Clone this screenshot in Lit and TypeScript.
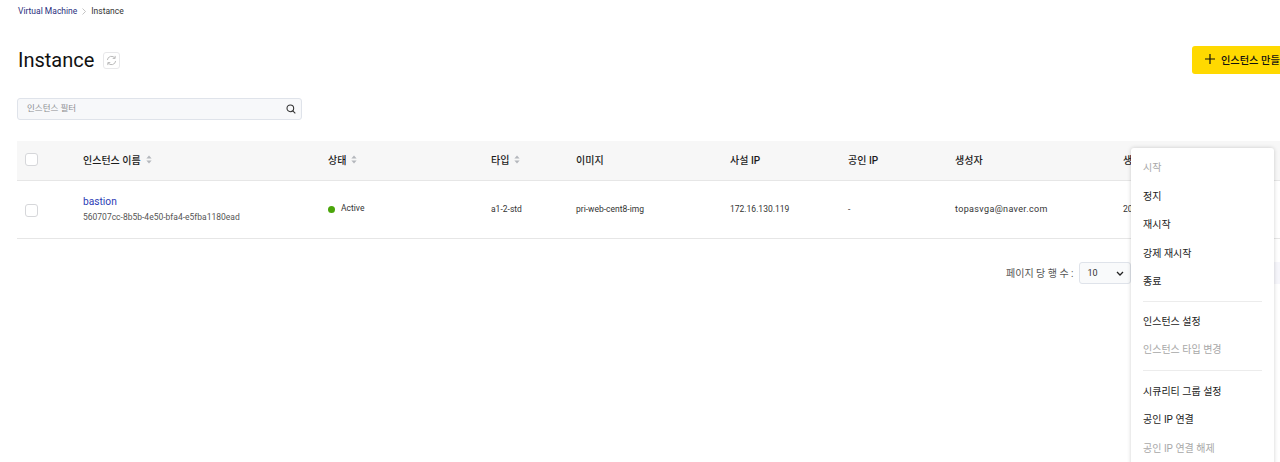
import { LitElement, html, css } from "lit";
import { customElement } from "lit/decorators.js";

const sortIcon = html`<svg class="sort" width="6" height="9" viewBox="0 0 6 9"><path d="M3 .5 5.6 3.6H.4z" fill="#b4b7bc"/><path d="M3 8.5 .4 5.4h5.2z" fill="#b4b7bc"/></svg>`;

type Entry = { label: string; off?: boolean } | { sep: "a" | "b" };

const menu: Entry[] = [
  { label: "시작", off: true },
  { label: "정지" },
  { label: "재시작" },
  { label: "강제 재시작" },
  { label: "종료" },
  { sep: "a" },
  { label: "인스턴스 설정" },
  { label: "인스턴스 타입 변경", off: true },
  { sep: "b" },
  { label: "시큐리티 그룹 설정" },
  { label: "공인 IP 연결" },
  { label: "공인 IP 연결 해제", off: true },
];

@customElement("app-root")
export class AppRoot extends LitElement {
  static styles = css`
    :host {
      display: block;
      position: relative;
      width: 1280px;
      height: 462px;
      overflow: hidden;
      background: #fff;
      font-family: Roboto, "Noto Sans CJK KR", sans-serif;
      color: #222;
    }
    .page {
      width: 1296px;
      padding: 6px 0 0 17px;
      box-sizing: border-box;
    }
    .crumbs {
      display: flex;
      align-items: center;
      height: 10px;
      padding-left: 1px;
      font-size: 8.5px;
      line-height: 10px;
      color: #333;
    }
    .crumbs .link { color: #2a2f7e; }
    .crumbs svg { margin: 0 5px 0 5px; }
    .head {
      display: flex;
      justify-content: space-between;
      align-items: center;
      margin-top: 30px;
      height: 28px;
      padding-left: 1px;
    }
    .title {
      display: flex;
      align-items: center;
      gap: 9px;
      font-size: 20px;
      font-weight: 400;
      color: #111;
    }
    .refresh {
      width: 17px;
      height: 17px;
      border: 1px solid #e8e8ea;
      border-radius: 3px;
      display: flex;
      align-items: center;
      justify-content: center;
      box-sizing: border-box;
    }
    .create {
      width: 104px;
      height: 28px;
      background: #ffd900;
      border-radius: 3px;
      display: flex;
      align-items: center;
      gap: 6px;
      padding: 0 0 2px 13px;
      box-sizing: border-box;
      font-size: 10.2px;
      font-weight: 500;
      color: #111;
      white-space: nowrap;
    }
    .filter {
      display: flex;
      align-items: center;
      justify-content: space-between;
      margin-top: 24px;
      width: 285px;
      height: 22px;
      padding: 0 5px 0 9px;
      box-sizing: border-box;
      background: #f7f8fa;
      border: 1px solid #dfe3ea;
      border-radius: 3px;
      font-size: 8.5px;
      color: #8b8d91;
    }
    .filter span { margin-top: -4px; }
    .table { margin-top: 21px; }
    .row {
      display: grid;
      grid-template-columns: 66px 245px 163px 85px 154px 118px 107px 168px 1fr;
      align-items: center;
      box-sizing: border-box;
      border-bottom: 1px solid #e6e6e6;
      white-space: nowrap;
    }
    .row.th {
      height: 40px;
      padding-bottom: 2px;
      background: #f7f7f7;
      font-size: 10px;
      font-weight: 500;
      color: #1c1c1c;
    }
    .row.td {
      height: 58px;
      padding-bottom: 1px;
      font-size: 8.5px;
      color: #333;
    }
    .cb {
      width: 13px;
      height: 13px;
      margin-left: 8px;
      background: #fff;
      border: 1px solid #d6d7da;
      border-radius: 3px;
      box-sizing: border-box;
    }
    .td .cb { margin-top: 3px; }
    .cell { display: flex; align-items: center; gap: 5px; }
    .sort { display: block; }
    .name { display: flex; flex-direction: column; gap: 3px; }
    .name a { font-size: 10.2px; line-height: 13px; color: #2b3bb5; }
    .name span { font-size: 8.5px; line-height: 12px; color: #555; }
    .dot {
      width: 7px;
      height: 7px;
      border-radius: 50%;
      background: #4aa50a;
    }
    .status { gap: 6px; }
    .status span { margin-top: -2px; }
    .mail { font-size: 9px; letter-spacing: 0.35px; }
    .pager {
      display: flex;
      align-items: center;
      gap: 5px;
      margin: 23px 0 0 989px;
      font-size: 10px;
      color: #555;
      white-space: nowrap;
    }
    .pager > span { margin-top: -2px; }
    .select {
      flex: none;
      width: 52px;
      height: 22px;
      box-sizing: border-box;
      border: 1px solid #dfe3ea;
      border-radius: 3px;
      background: #f9fafb;
      display: flex;
      align-items: center;
      justify-content: space-between;
      padding: 0 6px 0 8px;
      font-size: 9px;
      color: #333;
    }
    .pages {
      flex: none;
      width: 150px;
      height: 22px;
      margin-left: 2px;
      background: #f6f6fb;
      border-radius: 3px;
    }
    .menu {
      position: absolute;
      left: 1131px;
      top: 148px;
      width: 143px;
      height: 330px;
      box-sizing: border-box;
      background: #fff;
      border-radius: 3px;
      box-shadow: 0 0 4px rgba(0, 0, 0, 0.18);
      padding: 6px 12px 0;
      font-size: 10px;
      color: #222;
    }
    .item { height: 28.5px; line-height: 28.5px; white-space: nowrap; }
    .item.off { color: #a8a8a8; }
    .sep { height: 1px; background: #ececec; }
    .sep.a { margin: 4px 0 6px; }
    .sep.b { margin: 5px 0 7px; }
  `;

  render() {
    return html`
      <div class="page">
        <div class="crumbs">
          <span class="link">Virtual Machine</span>
          <svg width="4" height="7" viewBox="0 0 4 7"><path d="M.5.5l3 3-3 3" fill="none" stroke="#b5b5b5" stroke-width=".8"/></svg>
          <span>Instance</span>
        </div>
        <div class="head">
          <div class="title">
            <span>Instance</span>
            <div class="refresh">
              <svg width="11" height="11" viewBox="0 0 12 12" fill="none" stroke="#b4b4b4" stroke-width="1">
                <path d="M1.5 5.5A4.5 4.5 0 0 1 9.7 3.4"/><path d="M10.5 6.5A4.5 4.5 0 0 1 2.3 8.6"/>
                <path d="M10 1v2.7H7.3"/><path d="M2 11V8.3h2.7"/>
              </svg>
            </div>
          </div>
          <div class="create">
            <svg width="10" height="10" viewBox="0 0 10 10"><path d="M5 0v10M0 5h10" stroke="#111" stroke-width="1.2"/></svg>
            <span>인스턴스 만들기</span>
          </div>
        </div>
        <div class="filter">
          <span>인스턴스 필터</span>
          <svg width="10" height="10" viewBox="0 0 12 12" fill="none" stroke="#333" stroke-width="1.3"><circle cx="5.2" cy="5.2" r="4"/><path d="M8.2 8.2l3 3"/></svg>
        </div>
        <div class="table">
          <div class="row th">
            <div><div class="cb"></div></div>
            <div class="cell">인스턴스 이름 ${sortIcon}</div>
            <div class="cell">상태 ${sortIcon}</div>
            <div class="cell">타입 ${sortIcon}</div>
            <div>이미지</div>
            <div>사설 IP</div>
            <div>공인 IP</div>
            <div>생성자</div>
            <div>생성 일시</div>
          </div>
          <div class="row td">
            <div><div class="cb"></div></div>
            <div class="name">
              <a>bastion</a>
              <span>560707cc-8b5b-4e50-bfa4-e5fba1180ead</span>
            </div>
            <div class="cell status"><i class="dot"></i><span>Active</span></div>
            <div>a1-2-std</div>
            <div>pri-web-cent8-img</div>
            <div>172.16.130.119</div>
            <div>-</div>
            <div class="mail">topasvga@naver.com</div>
            <div>2021-11-20</div>
          </div>
        </div>
        <div class="pager">
          <span>페이지 당 행 수 :</span>
          <div class="select">
            <span>10</span>
            <svg width="8" height="5" viewBox="0 0 8 5"><path d="M1 1l3 3 3-3" fill="none" stroke="#222" stroke-width="1.3"/></svg>
          </div>
          <div class="pages"></div>
        </div>
      </div>
      <div class="menu">
        ${menu.map((m) =>
          "sep" in m
            ? html`<div class="sep ${m.sep}"></div>`
            : html`<div class="item ${m.off ? "off" : ""}">${m.label}</div>`
        )}
      </div>
    `;
  }
}
